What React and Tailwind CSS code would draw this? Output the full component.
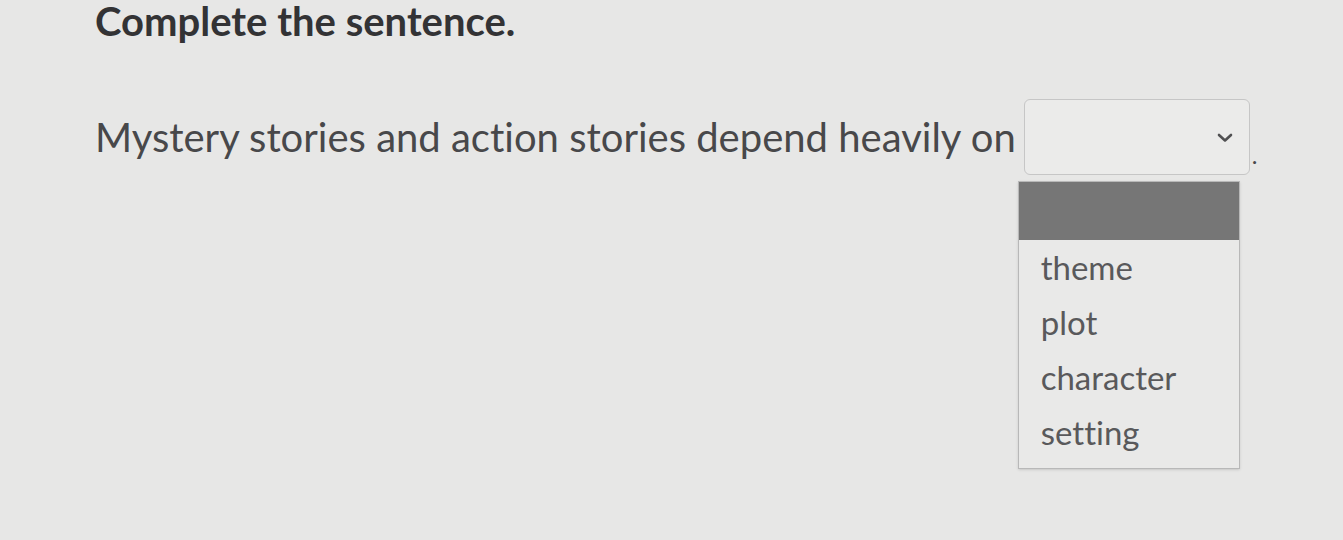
import React from 'react';

const options = ['theme', 'plot', 'character', 'setting'];

export default function App() {
    return (
        <div className="w-[1343px] h-[540px] overflow-hidden bg-[#e7e7e6] text-[#3d3d3f] [font-variant-ligatures:none]" style={{ fontFamily: 'Lato, "Liberation Sans", sans-serif' }}>
            <div className="pl-[95px] pt-[2px]">
                <h1 className="text-[40px] font-bold leading-[42px] -mt-[2px] text-[#333335]">Complete the sentence.</h1>
                <div className="mt-[57px] flex items-center text-[40px] text-[#48484a]">
                    <span>Mystery stories and action stories depend heavily on</span>
                    <div className="relative ml-[8px]">
                        <div className="w-[226px] h-[76px] border border-[#c6c6c6] rounded-[6px] bg-[#ebebea] flex items-center justify-end pr-[14px]">
                            <svg width="20" height="13" viewBox="0 0 20 13" fill="none" stroke="#505052" strokeWidth="2.6" strokeLinecap="round" strokeLinejoin="round">
                                <path d="M4 4l6 5.5 6-5.5" />
                            </svg>
                        </div>
                        <div className="absolute -left-[6px] top-[82px] w-[222px] border border-[#b8b8b8] bg-[#e9e9e8] shadow-sm">
                            <div className="h-[58px] bg-[#767676]" />
                            <ul className="pb-[8px] text-[33px] text-[#59595b]">
                                {options.map((o) => (
                                    <li key={o} className="h-[55px] pl-[22px] flex items-center">{o}</li>
                                ))}
                            </ul>
                        </div>
                    </div>
                    <span className="self-end mb-[2px] ml-[2px] text-[24px]">.</span>
                </div>
            </div>
        </div>
    );
}
